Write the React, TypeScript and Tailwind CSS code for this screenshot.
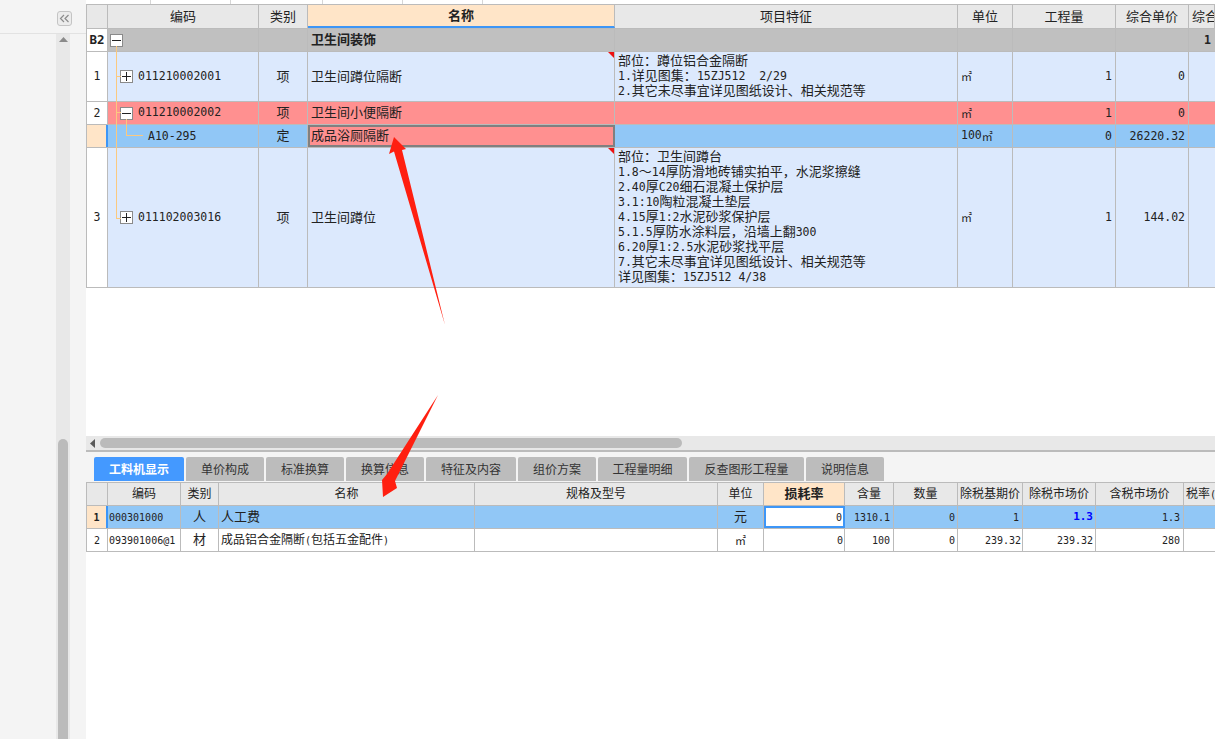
import React from 'react';

const font = "font-['Noto_Sans_CJK_SC',sans-serif]";

const topCols = ['w-[21px]', 'w-[151px]', 'w-[49px]', 'w-[307px]', 'w-[343px]', 'w-[55px]', 'w-[103px]', 'w-[73px]', 'flex-1'];
const bottomCols = ['w-[21px]', 'w-[73px]', 'w-[38px]', 'w-[256px]', 'w-[243px]', 'w-[46px]', 'w-[81px]', 'w-[49px]', 'w-[64px]', 'w-[65px]', 'w-[73px]', 'w-[88px]', 'flex-1'];

// latin runs get a narrow mono face, the rest stays CJK
const T = ({ text, latin }: { text: string; latin: string }) => (
  <>
    {text.split(/([\x20-\x7e]+)/).map((part, i) =>
      /^[\x20-\x7e]+$/.test(part) ? (
        <span key={i} className={`font-['DejaVu_Sans_Mono',monospace] whitespace-pre ${latin}`}>{part}</span>
      ) : (
        part
      )
    )}
  </>
);

type CellProps = { width: string; className?: string; latin?: string; children?: React.ReactNode };

const Cell = ({ width, className = '', latin = 'text-[11.5px]', children }: CellProps) => (
  <div className={`${width} shrink-0 min-w-0 h-full flex items-center border-r border-[#bbbbbb] overflow-hidden whitespace-nowrap ${className}`}>
    {typeof children === 'string' ? <span className="mb-[2px]"><T text={children} latin={latin} /></span> : children}
  </div>
);

const BCell = (props: CellProps) => <Cell latin="text-[10px]" {...props} />;

const Tree = ({ open }: { open: boolean }) => (
  <span className="relative w-[13px] h-[13px] shrink-0 bg-white border border-[#8a8a8a] flex items-center justify-center">
    <span className="absolute w-[9px] h-px bg-[#222]" />
    {!open && <span className="absolute w-px h-[9px] bg-[#222]" />}
  </span>
);

const Flag = () => (
  <span className="absolute top-0 right-0 w-0 h-0 border-t-[6px] border-l-[6px] border-t-[#ee1111] border-l-transparent" />
);

const Unit = () => <span className="text-[11px]">㎡</span>;

const headers = ['', '编码', '类别', '名称', '项目特征', '单位', '工程量', '综合单价', '综合'];
const bottomHeaders = ['', '编码', '类别', '名称', '规格及型号', '单位', '损耗率', '含量', '数量', '除税基期价', '除税市场价', '含税市场价', '税率('];

const features1 = ['部位：蹲位铝合金隔断', '1.详见图集：15ZJ512  2/29', '2.其它未尽事宜详见图纸设计、相关规范等'];
const features3 = [
  '部位：卫生间蹲台',
  '1.8～14厚防滑地砖铺实拍平，水泥浆擦缝',
  '2.40厚C20细石混凝土保护层',
  '3.1:10陶粒混凝土垫层',
  '4.15厚1:2水泥砂浆保护层',
  '5.1.5厚防水涂料层，沿墙上翻300',
  '6.20厚1:2.5水泥砂浆找平层',
  '7.其它未尽事宜详见图纸设计、相关规范等',
  '详见图集：15ZJ512 4/38',
];

const tabs = [
  { label: '工料机显示', w: 'w-[90px]' },
  { label: '单价构成', w: 'w-[78px]' },
  { label: '标准换算', w: 'w-[78px]' },
  { label: '换算信息', w: 'w-[78px]' },
  { label: '特征及内容', w: 'w-[90px]' },
  { label: '组价方案', w: 'w-[78px]' },
  { label: '工程量明细', w: 'w-[89px]' },
  { label: '反查图形工程量', w: 'w-[115px]' },
  { label: '说明信息', w: 'w-[78px]' },
];

const Features = ({ lines }: { lines: string[] }) => (
  <div className="pl-[3px] pb-[4px] whitespace-pre">
    {lines.map((l, i) => (
      <div key={i} className="h-[15px] leading-[15px]"><T text={l} latin="text-[11.5px] leading-none" /></div>
    ))}
  </div>
);

const rowBorder = 'flex border-b border-[#bbbbbb]';
const numCell = 'justify-center bg-white';

const App = () => {
  return (
    <div className={`relative w-[1215px] h-[739px] overflow-hidden flex bg-white text-[13px] text-[#222] ${font}`}>
      {/* Left pane */}
      <div className="w-[86px] shrink-0 flex flex-col bg-[#f4f4f4]">
        <div className="h-[34px] shrink-0 border-b border-[#e2e2e2] flex items-start pt-[11px] pl-[57px]">
          <div className="w-[15px] h-[15px] rounded-[3px] border border-[#c4c4c4] bg-[#ececec] flex items-center justify-center">
            <svg width="11" height="9" viewBox="0 0 11 9" fill="none" stroke="#8c8c8c" strokeWidth="1.2">
              <path d="M5 1 1.5 4.5 5 8M9.5 1 6 4.5 9.5 8" />
            </svg>
          </div>
        </div>
        <div className="flex-1 flex">
          <div className="ml-[56px] w-[14px] bg-[#e8e8e8] flex flex-col items-center pt-[3px]">
            <svg width="9" height="5" viewBox="0 0 9 5" fill="#8a8a8a">
              <path d="M4.5 0 9 5H0z" />
            </svg>
            <div className="mt-[397px] w-[10px] flex-1 bg-[#bbbbbb] rounded-t-[5px]" />
          </div>
        </div>
      </div>

      {/* Main */}
      <div className="flex-1 min-w-0 flex flex-col">
        <div className="h-[4px] shrink-0 flex bg-white">
          <div className="w-[65px] border-r border-[#d6d6d6]" />
          <div className="w-[80px] border-r border-[#d6d6d6]" />
          <div className="w-[92px] border-r border-[#d6d6d6]" />
          <div className="w-[80px] border-r border-[#d6d6d6]" />
          <div className="w-[80px] border-r border-[#d6d6d6]" />
        </div>

        {/* Upper grid */}
        <div className="relative h-[284px] shrink-0 border-t border-l border-[#bbbbbb]">
          <div className={`h-[24px] bg-[#e8e8e8] ${rowBorder}`}>
            {headers.map((h, i) => (
              <Cell
                key={i}
                width={topCols[i]}
                className={`justify-center ${i === 3 ? 'bg-[#ffe5c8] font-bold border-b-2 border-b-[#3d96f7]' : ''} ${i === 8 ? '!justify-start pl-[3px]' : ''}`}
              >
                {h}
              </Cell>
            ))}
          </div>

          <div className={`h-[23px] bg-[#c0c0c0] font-bold ${rowBorder}`}>
            <Cell width={topCols[0]} className={numCell} latin="text-[12.5px]">B2</Cell>
            <Cell width={topCols[1]} className="pl-[2px]"><Tree open /></Cell>
            <Cell width={topCols[2]} />
            <Cell width={topCols[3]} className="pl-[3px]">卫生间装饰</Cell>
            <Cell width={topCols[4]} />
            <Cell width={topCols[5]} />
            <Cell width={topCols[6]} />
            <Cell width={topCols[7]} />
            <Cell width={topCols[8]} className="border-r-0 pl-[15px]">1</Cell>
          </div>

          <div className={`h-[50px] bg-[#dce9fd] ${rowBorder}`}>
            <Cell width={topCols[0]} className={numCell}>1</Cell>
            <Cell width={topCols[1]} className="pl-[12px] gap-[5px]"><Tree open={false} /><T text="011210002001" latin="text-[11.5px]" /></Cell>
            <Cell width={topCols[2]} className="justify-center">项</Cell>
            <Cell width={topCols[3]} className="relative pl-[3px]"><span className="mb-[2px]">卫生间蹲位隔断</span><Flag /></Cell>
            <Cell width={topCols[4]}><Features lines={features1} /></Cell>
            <Cell width={topCols[5]} className="pl-[3px]"><Unit /></Cell>
            <Cell width={topCols[6]} className="justify-end pr-[3px]">1</Cell>
            <Cell width={topCols[7]} className="justify-end pr-[3px]">0</Cell>
            <Cell width={topCols[8]} className="border-r-0" />
          </div>

          <div className={`h-[23px] bg-[#ff9090] ${rowBorder}`}>
            <Cell width={topCols[0]} className={numCell}>2</Cell>
            <Cell width={topCols[1]} className="pl-[12px] gap-[5px]"><Tree open /><T text="011210002002" latin="text-[11.5px]" /></Cell>
            <Cell width={topCols[2]} className="justify-center">项</Cell>
            <Cell width={topCols[3]} className="pl-[3px]">卫生间小便隔断</Cell>
            <Cell width={topCols[4]} />
            <Cell width={topCols[5]} className="pl-[3px]"><Unit /></Cell>
            <Cell width={topCols[6]} className="justify-end pr-[3px]">1</Cell>
            <Cell width={topCols[7]} className="justify-end pr-[3px]">0</Cell>
            <Cell width={topCols[8]} className="border-r-0" />
          </div>

          <div className={`h-[23px] bg-[#91c7f6] ${rowBorder}`}>
            <Cell width={topCols[0]} className="bg-[#ffe5c8] !border-r-2 !border-r-[#3d96f7]" />
            <Cell width={topCols[1]} className="pl-[40px]">A10-295</Cell>
            <Cell width={topCols[2]} className="justify-center">定</Cell>
            <Cell width={topCols[3]} className="pl-[1px] bg-[#ff9090] !border-2 !border-[#808080]">成品浴厕隔断</Cell>
            <Cell width={topCols[4]} />
            <Cell width={topCols[5]} className="pl-[3px]"><T text="100" latin="text-[11.5px]" /><Unit /></Cell>
            <Cell width={topCols[6]} className="justify-end pr-[3px]">0</Cell>
            <Cell width={topCols[7]} className="justify-end pr-[3px]">26220.32</Cell>
            <Cell width={topCols[8]} className="border-r-0" />
          </div>

          <div className={`h-[140px] bg-[#dce9fd] ${rowBorder}`}>
            <Cell width={topCols[0]} className={numCell}>3</Cell>
            <Cell width={topCols[1]} className="pl-[12px] gap-[5px]"><Tree open={false} /><T text="011102003016" latin="text-[11.5px]" /></Cell>
            <Cell width={topCols[2]} className="justify-center">项</Cell>
            <Cell width={topCols[3]} className="relative pl-[3px]"><span className="mb-[2px]">卫生间蹲位</span><Flag /></Cell>
            <Cell width={topCols[4]}><Features lines={features3} /></Cell>
            <Cell width={topCols[5]} className="pl-[3px]"><Unit /></Cell>
            <Cell width={topCols[6]} className="justify-end pr-[3px]">1</Cell>
            <Cell width={topCols[7]} className="justify-end pr-[3px]">144.02</Cell>
            <Cell width={topCols[8]} className="border-r-0" />
          </div>

          {/* Tree connectors */}
          <div className="absolute left-[29px] top-[41px] w-px h-[172px] bg-[#fbc97f]" />
          <div className="absolute left-[29px] top-[71px] w-[5px] h-px bg-[#fbc97f]" />
          <div className="absolute left-[29px] top-[107px] w-[5px] h-px bg-[#fbc97f]" />
          <div className="absolute left-[29px] top-[213px] w-[5px] h-px bg-[#fbc97f]" />
          <div className="absolute left-[39px] top-[114px] w-px h-[16px] bg-[#fbc97f]" />
          <div className="absolute left-[39px] top-[130px] w-[17px] h-px bg-[#fbc97f]" />
        </div>

        <div className="h-[148px] shrink-0 bg-white" />

        {/* Horizontal scrollbar */}
        <div className="h-[14px] shrink-0 bg-[#e8e8e8] flex items-center pl-[4px]">
          <svg width="5" height="9" viewBox="0 0 5 9" fill="#5a5a5a">
            <path d="M5 0v9L0 4.5z" />
          </svg>
          <div className="ml-[5px] w-[582px] h-[10px] rounded-[5px] bg-[#bbbbbb]" />
        </div>

        {/* Tabs */}
        <div className="h-[32px] shrink-0 border-t-2 border-[#bbbbbb] bg-[#f4f4f4] pt-[5px] pl-[8px] flex gap-[2px] items-start">
          {tabs.map((t, i) => (
            <div
              key={t.label}
              className={`${t.w} h-[24px] shrink-0 rounded-t-[2px] flex items-center justify-center text-[12px] ${i === 0 ? 'bg-[#4499ff] text-white font-bold' : 'bg-[#bcbcbc] text-[#333]'}`}
            >
              {t.label}
            </div>
          ))}
        </div>

        {/* Lower grid */}
        <div className="shrink-0 border-t border-l border-[#bbbbbb] text-[12px]">
          <div className={`h-[23px] bg-[#e8e8e8] ${rowBorder}`}>
            {bottomHeaders.map((h, i) => (
              <BCell
                key={i}
                width={bottomCols[i]}
                className={`justify-center ${i === 6 ? 'bg-[#ffe5c8] font-bold text-[13px]' : ''} ${i === 12 ? 'border-r-0 !justify-start pl-[2px]' : ''}`}
              >
                {h}
              </BCell>
            ))}
          </div>

          <div className={`h-[23px] bg-[#91c7f6] ${rowBorder}`}>
            <BCell width={bottomCols[0]} className="justify-center bg-[#ffe5c8] font-bold !border-r-2 !border-r-[#3d96f7]">1</BCell>
            <BCell width={bottomCols[1]} className="pl-[1px]">000301000</BCell>
            <BCell width={bottomCols[2]} className="justify-center text-[13px]">人</BCell>
            <BCell width={bottomCols[3]} className="pl-[2px] text-[13px]">人工费</BCell>
            <BCell width={bottomCols[4]} />
            <BCell width={bottomCols[5]} className="justify-center text-[13px]">元</BCell>
            <BCell width={bottomCols[6]} className="justify-end pr-[1px] bg-white !border-2 !border-[#3d96f7]">0</BCell>
            <BCell width={bottomCols[7]} className="justify-end pr-[3px]">1310.1</BCell>
            <BCell width={bottomCols[8]} className="justify-end pr-[2px]">0</BCell>
            <BCell width={bottomCols[9]} className="justify-end pr-[3px]">1</BCell>
            <BCell width={bottomCols[10]} className="justify-end pr-[2px] text-[#0000ff] font-bold" latin="text-[11px]">1.3</BCell>
            <BCell width={bottomCols[11]} className="justify-end pr-[3px]">1.3</BCell>
            <BCell width={bottomCols[12]} className="border-r-0" />
          </div>

          <div className={`h-[23px] bg-white ${rowBorder}`}>
            <BCell width={bottomCols[0]} className="justify-center">2</BCell>
            <BCell width={bottomCols[1]} className="pl-[1px]">093901006@1</BCell>
            <BCell width={bottomCols[2]} className="justify-center text-[13px]">材</BCell>
            <BCell width={bottomCols[3]} className="pl-[2px]">成品铝合金隔断(包括五金配件)</BCell>
            <BCell width={bottomCols[4]} />
            <BCell width={bottomCols[5]} className="justify-center"><Unit /></BCell>
            <BCell width={bottomCols[6]} className="justify-end pr-[1px]">0</BCell>
            <BCell width={bottomCols[7]} className="justify-end pr-[3px]">100</BCell>
            <BCell width={bottomCols[8]} className="justify-end pr-[2px]">0</BCell>
            <BCell width={bottomCols[9]} className="justify-end pr-[1px]">239.32</BCell>
            <BCell width={bottomCols[10]} className="justify-end pr-[2px]">239.32</BCell>
            <BCell width={bottomCols[11]} className="justify-end pr-[3px]">280</BCell>
            <BCell width={bottomCols[12]} className="border-r-0" />
          </div>
        </div>
        <div className="flex-1 bg-white" />
      </div>

      {/* Red annotation arrows pasted over the screenshot */}
      <svg className="absolute inset-0 pointer-events-none" width="1215" height="739" viewBox="0 0 1215 739">
        <path d="M394 137 406 149 402 150 445 325 394 151.5 389 154z" fill="#ff1f10" />
        <path d="M383 497 382 480 387 474 438 395 395 481 397 488z" fill="#ff1f10" />
      </svg>
    </div>
  );
};

export default App;
